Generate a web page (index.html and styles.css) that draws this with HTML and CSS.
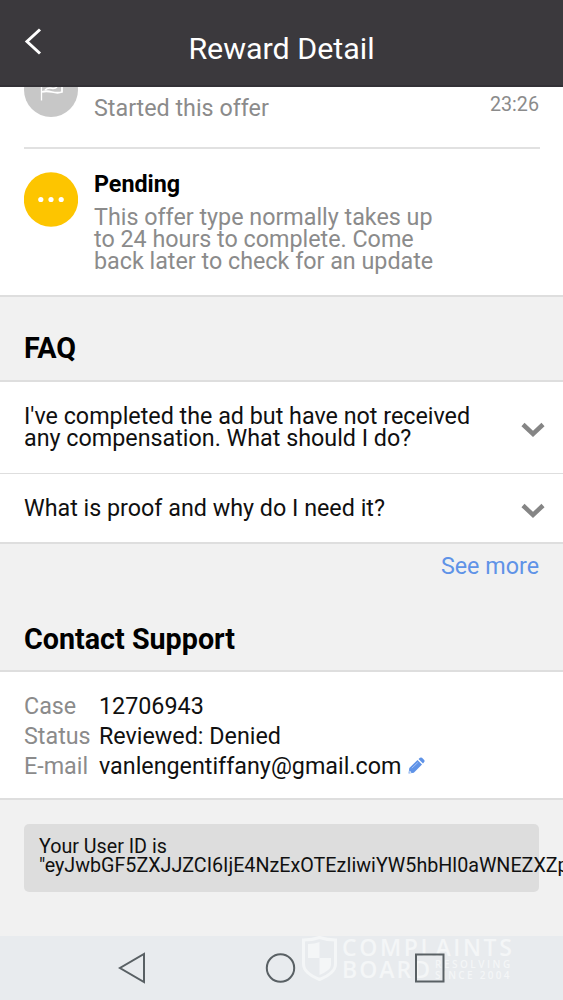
FILE: index.html
```html
<!DOCTYPE html>
<html lang="en">
<head>
<meta charset="utf-8">
<title>Reward Detail</title>
<link rel="stylesheet" href="styles.css">
</head>
<body>
<div class="screen">
  <header class="header">
    <svg class="back" width="20" height="28" viewBox="0 0 20 28"><path d="M17 1.500 4 13.500l13 12" fill="none" stroke="#fff" stroke-width="3"/></svg>
    <h1 class="title">Reward Detail</h1>
  </header>
  <section class="timeline">
    <div class="event event-started">
      <svg class="badge badge-cut" width="54" height="54" viewBox="0 0 54 54"><circle cx="27" cy="27" r="27" fill="#c7c7c7"/><path d="M17.500 16v21.500" stroke="#fff" stroke-width="1.300"/><path d="M18 17c7-2 10 3 20 0v12c-8 3-12-3-20 0" fill="none" stroke="#fff" stroke-width="1.800"/><path d="M21 27c5-5 8 1 12-3" fill="none" stroke="#fff" stroke-width="1.500"/></svg>
      <span class="started">Started this offer</span>
      <time class="time">23:26</time>
    </div>
    <div class="event event-pending">
      <svg class="badge" width="54" height="55" viewBox="0 0 54 55"><circle cx="27" cy="27.500" r="27.200" fill="#fdc500"/><g fill="#fff"><circle cx="16.800" cy="27.500" r="2.600"/><circle cx="27" cy="27.500" r="2.600"/><circle cx="37.200" cy="27.500" r="2.600"/></g></svg>
      <div class="event-body">
        <h2 class="event-title">Pending</h2>
        <p class="event-text">This offer type normally takes up<br>to 24 hours to complete. Come<br>back later to check for an update</p>
      </div>
    </div>
  </section>
  <h2 class="heading heading-faq">FAQ</h2>
  <section class="faq">
    <div class="question question-long"><span>I've completed the ad but have not received<br>any compensation. What should I do?</span><svg class="chevron" width="24" height="16" viewBox="0 0 24 16"><path d="m2 2.500 10 9.500 10-9.500" fill="none" stroke="#858585" stroke-width="4.500"/></svg></div>
    <div class="question"><span>What is proof and why do I need it?</span><svg class="chevron" width="24" height="16" viewBox="0 0 24 16"><path d="m2 2.500 10 9.500 10-9.500" fill="none" stroke="#858585" stroke-width="4.500"/></svg></div>
  </section>
  <a class="more">See more</a>
  <h2 class="heading heading-support">Contact Support</h2>
  <section class="support">
    <dl class="details">
      <dt>Case</dt><dd>12706943</dd>
      <dt>Status</dt><dd>Reviewed: Denied</dd>
      <dt>E-mail</dt><dd class="email"><span>vanlengentiffany@gmail.com</span><svg width="17" height="17" viewBox="0 0 17 17"><path d="M.5 16.500 1.300 11 9.500 3l4.500 4.500-8.200 8.200ZM10.500 2 12 .8q1-.8 2 0l2.200 2.200q.8 1 0 2L15 6.500Z" fill="#5f93e7"/><path d="m3.800 11.200 6-5.700" stroke="#9dbdf5"/><path d="m1.500 13.500 2 2-2 .5Z" fill="#fff"/></svg></dd>
    </dl>
  </section>
  <div class="userid"><span>Your User ID is</span><span>"eyJwbGF5ZXJJZCI6IjE4NzExOTEzIiwiYW5hbHl0aWNEZXZp</span></div>
  <nav class="nav">
    <div class="watermark">
      <svg width="35" height="45" viewBox="0 0 35 45"><path d="M17.500 1.500Q25 4 33.500 4v24q0 9-16 15.500Q1.500 37 1.500 28V4q9 0 16-2.500Z" fill="none" stroke="#f4f6f7" stroke-width="3"/><path d="M6 8q7 0 11.500-2v16H6ZM17.500 22H29v7q0 5-11.500 10Z" fill="#f4f6f7"/></svg>
      <div class="brand"><span class="brand-top">COMPLAINTS</span><div class="brand-row"><span class="brand-board">BOARD</span><span class="tagline"><span>RESOLVING</span><span class="since">SINCE 2004</span></span></div></div>
    </div>
    <svg class="keys" width="330" height="34" viewBox="0 0 330 34" fill="none" stroke="#596064" stroke-width="2"><path d="M26 3v28L2 17Z"/><circle cx="162.500" cy="17" r="13.700"/><path d="M298 3.500h27.500v27H298Z"/></svg>
  </nav>
</div>
</body>
</html>
```
FILE: styles.css
```css
* { box-sizing: border-box; margin: 0; padding: 0; }
body { width: 563px; height: 1000px; overflow: hidden; background: #f1f1f1; color: #101010; font-family: Roboto, sans-serif; font-size: 23.300px; line-height: 22px; white-space: nowrap; }
.screen { display: flex; flex-direction: column; height: 1000px; overflow: hidden; }
.header { flex: none; height: 87px; background: #3b393d; border-bottom: 2px solid #333136; display: grid; grid-template-columns: 43px 1fr 43px; }
.back { margin: 28px 0 0 23px; }
.title { color: #fff; font-weight: 400; font-size: 30.400px; line-height: 36px; text-align: center; padding-top: 31px; }
.timeline { flex: none; height: 210px; background: #fff; border-bottom: 2px solid #dedede; padding: 0 23px 0 24px; overflow: hidden; }
.event { display: flex; gap: 16px; }
.event-started { height: 62px; border-bottom: 2px solid #e1e1e1; }
.badge { flex: none; }
.badge-cut { margin-top: -24px; }
.started { color: #8b8b8b; padding-top: 10px; }
.time { color: #8b8b8b; font-size: 19.700px; margin-left: auto; padding: 7px 1px 0 0; }
.event-pending { padding-top: 22px; }
.event-pending .badge { margin-top: 1px; }
.event-title { font-size: 23.300px; font-weight: 700; line-height: 26px; color: #000; }
.event-text { color: #8b8b8b; padding-top: 9px; }
.heading { flex: none; font-size: 28.700px; font-weight: 700; line-height: 34px; padding-left: 24px; color: #000; }
.heading-faq { height: 83px; padding-top: 34px; }
.faq, .support { flex: none; background: #fff; border-top: 2px solid #dedede; border-bottom: 2px solid #dedede; }
.faq { height: 164px; }
.question { height: 70px; display: flex; justify-content: space-between; align-items: center; padding: 0 18px 3px 24px; }
.question-long { height: 92px; padding-bottom: 2px; border-bottom: 1px solid #dedede; }
.chevron { margin-top: 6px; }
.more { flex: none; color: #5f93e7; text-align: right; padding: 11px 24px 0; height: 68px; }
.heading-support { height: 58px; padding-top: 10px; }
.support { height: 130px; padding: 19px 24px; }
.details { display: grid; grid-template-columns: 75px 1fr; line-height: 30px; }
.details dt { color: #8b8b8b; }
.email { display: flex; align-items: center; gap: 7px; }
.email svg { margin-top: -1px; }
.userid { flex: none; width: 515px; height: 68px; margin: 24px 24px 0; border-radius: 5px; background: #ddd; padding: 13px 15px; font-size: 19.700px; line-height: 19px; display: flex; flex-direction: column; }
.nav { flex: none; height: 64px; margin-top: 44px; background: #e8ebee; display: grid; }
.nav > * { grid-area: 1 / 1; }
.keys { margin: 15px 0 0 118px; z-index: 1; }
.watermark { display: flex; gap: 5px; padding-left: 302px; color: #f4f6f7; }
.brand { display: flex; flex-direction: column; font-family: "Open Sans", sans-serif; font-weight: 600; line-height: 22px; font-size: 23px; letter-spacing: 2.600px; }
.brand-row { display: flex; gap: 3px; }
.brand-board { letter-spacing: 2px; }
.tagline { display: flex; flex-direction: column; font-size: 10px; line-height: 11px; letter-spacing: 2.500px; padding-top: 1px; }
.since { letter-spacing: 2.300px; }
```
